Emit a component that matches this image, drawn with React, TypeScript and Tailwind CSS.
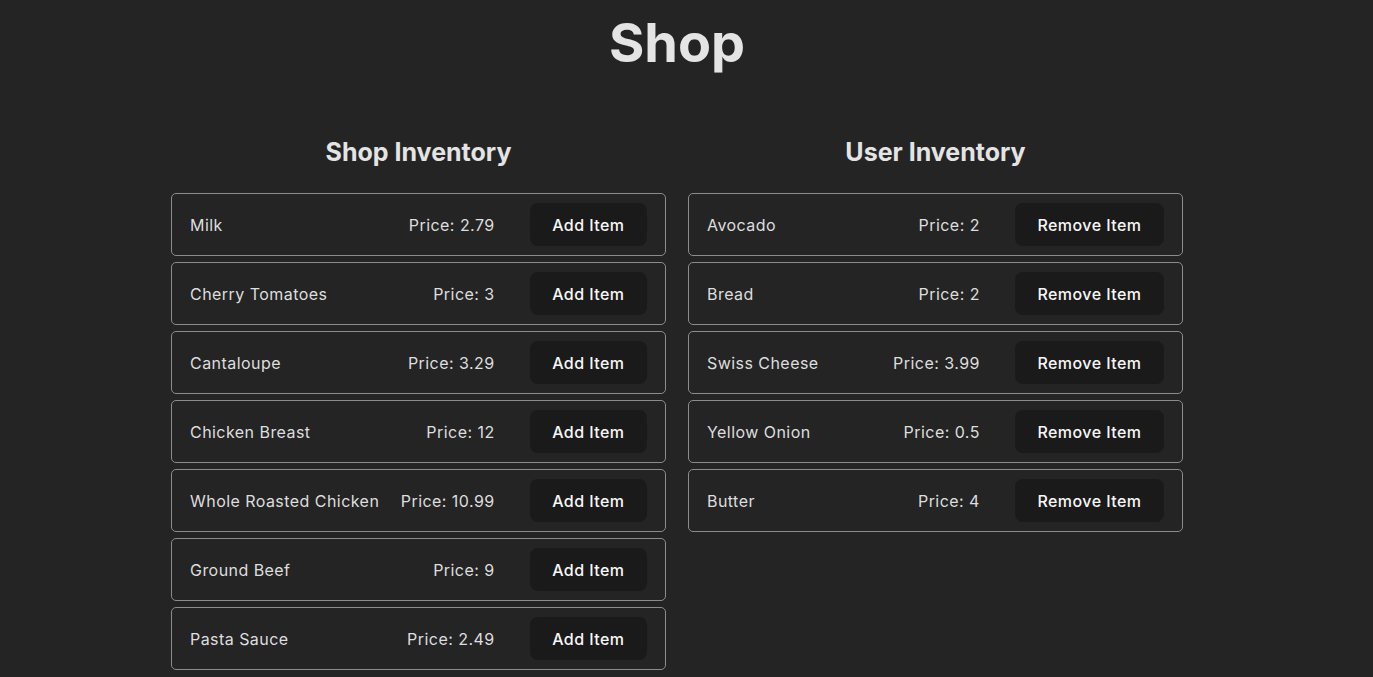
const shopItems = [
  { name: "Milk", price: 2.79 },
  { name: "Cherry Tomatoes", price: 3 },
  { name: "Cantaloupe", price: 3.29 },
  { name: "Chicken Breast", price: 12 },
  { name: "Whole Roasted Chicken", price: 10.99 },
  { name: "Ground Beef", price: 9 },
  { name: "Pasta Sauce", price: 2.49 },
];

const userItems = [
  { name: "Avocado", price: 2 },
  { name: "Bread", price: 2 },
  { name: "Swiss Cheese", price: 3.99 },
  { name: "Yellow Onion", price: 0.5 },
  { name: "Butter", price: 4 },
];

function ItemRow({ name, price, action }: { name: string; price: number; action: string }) {
  return (
    <div className="flex items-center justify-between border border-[#8c8c8c] rounded-[5px] pl-[18px] pr-[18px] py-[9px]">
      <span className="text-[16px] tracking-[0.45px] text-[#dedede]">{name}</span>
      <div className="flex items-center gap-[35px]">
        <span className="text-[16px] tracking-[0.45px] text-[#dedede]">Price: {price}</span>
        <button
          type="button"
          className="bg-[#1a1a1a] rounded-[8px] px-[22.5px] py-[9.6px] text-[16px] leading-[24px] tracking-[0.45px] font-medium text-[#f7f7f7]"
        >
          {action}
        </button>
      </div>
    </div>
  );
}

function Column({ title, items, action }: { title: string; items: { name: string; price: number }[]; action: string }) {
  return (
    <div className="w-[495px] flex flex-col">
      <h2 className="text-[25px] leading-[32px] font-bold text-center text-[#e4e4e4] mt-[136px] mb-[25px]">{title}</h2>
      <div className="flex flex-col gap-[5.8px]">
        {items.map((item) => (
          <ItemRow key={item.name} name={item.name} price={item.price} action={action} />
        ))}
      </div>
    </div>
  );
}

export default function App() {
  return (
    <div
      className="min-h-screen bg-[#242424] text-[#dedede] pr-[19px]"
      style={{ fontFamily: "Inter, 'Noto Sans', sans-serif" }}
    >
      <div className="relative flex flex-col items-center">
        <h1 className="absolute top-[11px] text-[54px] leading-[64px] font-bold text-[#e4e4e4]">Shop</h1>
        <div className="flex gap-[22px] items-start">
          <Column title="Shop Inventory" items={shopItems} action="Add Item" />
          <Column title="User Inventory" items={userItems} action="Remove Item" />
        </div>
      </div>
    </div>
  );
}
